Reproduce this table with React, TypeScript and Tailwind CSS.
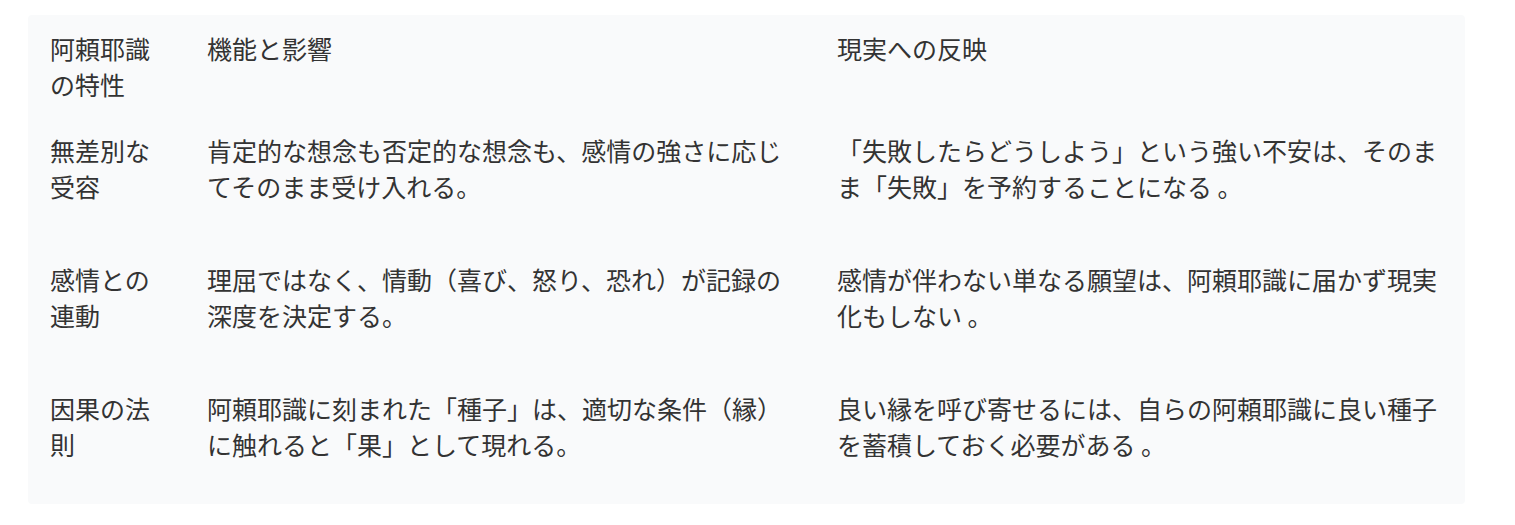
const rows = [
  {
    trait: "無差別な受容",
    func: "肯定的な想念も否定的な想念も、感情の強さに応じてそのまま受け入れる。",
    effect: "「失敗したらどうしよう」という強い不安は、そのまま「失敗」を予約することになる 。",
  },
  {
    trait: "感情との連動",
    func: "理屈ではなく、情動（喜び、怒り、恐れ）が記録の深度を決定する。",
    effect: "感情が伴わない単なる願望は、阿頼耶識に届かず現実化もしない 。",
  },
  {
    trait: "因果の法則",
    func: "阿頼耶識に刻まれた「種子」は、適切な条件（縁）に触れると「果」として現れる。",
    effect: "良い縁を呼び寄せるには、自らの阿頼耶識に良い種子を蓄積しておく必要がある 。",
  },
];

const App = () => {
  return (
    <div className="min-h-screen bg-white pl-[28px] pt-[15px]">
      <div
        className="w-[1437px] bg-[#f9fafb] rounded-sm text-[25px] leading-[36px] text-[#333333]"
        style={{ fontFamily: '"Noto Sans CJK JP", "Noto Sans", sans-serif' }}
      >
        {/* Header */}
        <div className="grid grid-cols-[157px_630px_650px]">
          <div className="px-[22px] pt-[15px] pb-[15px]">阿頼耶識の特性</div>
          <div className="px-[22px] pt-[15px] pb-[15px]">機能と影響</div>
          <div className="px-[22px] pt-[15px] pb-[15px]">現実への反映</div>
        </div>
        {/* Rows */}
        {rows.map((r) => (
          <div key={r.trait} className="grid grid-cols-[157px_630px_650px]">
            <div className="px-[22px] pt-[15px] pb-[42px]">{r.trait}</div>
            <div className="px-[22px] pt-[15px] pb-[42px]">{r.func}</div>
            <div className="px-[22px] pt-[15px] pb-[42px]">{r.effect}</div>
          </div>
        ))}
      </div>
    </div>
  );
};

export default App;
